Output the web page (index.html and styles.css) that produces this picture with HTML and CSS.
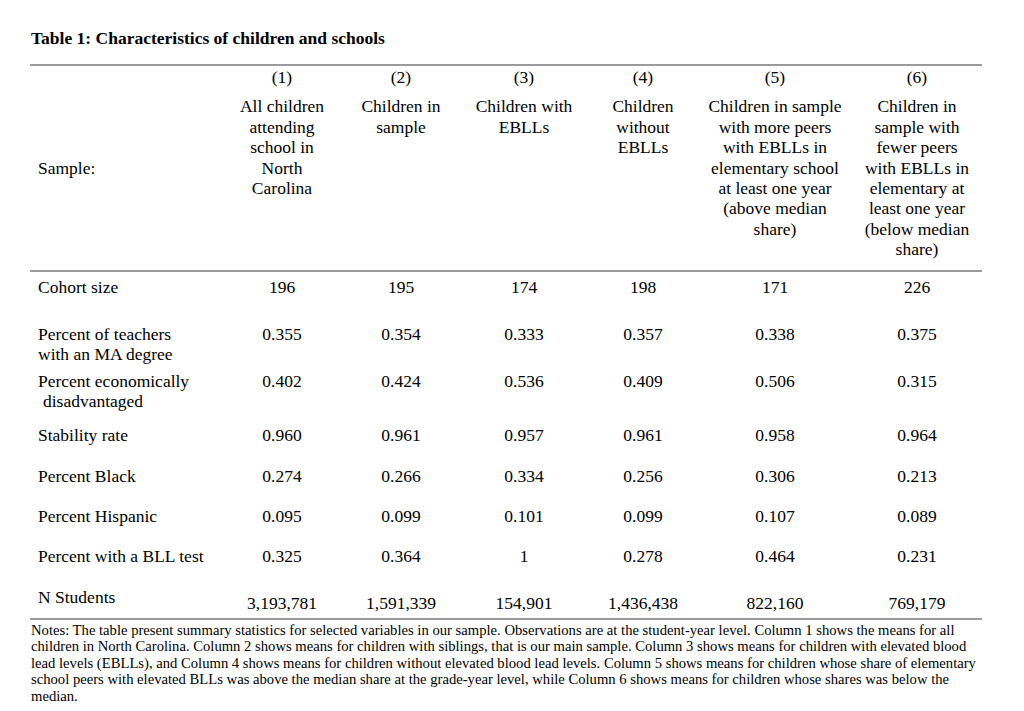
FILE: index.html
```html
<!DOCTYPE html>
<html lang="en">
<head>
<meta charset="utf-8">
<title>Table 1: Characteristics of children and schools</title>
<link rel="stylesheet" href="styles.css">
</head>
<body>
<div class="page">
  <h1 class="title">Table 1: Characteristics of children and schools</h1>
  <table class="stats">
    <colgroup>
      <col class="c-label">
      <col class="c1">
      <col class="c2">
      <col class="c3">
      <col class="c4">
      <col class="c5">
      <col class="c6">
    </colgroup>
    <thead>
      <tr class="colnums">
        <th class="label sample" rowspan="2">Sample:</th>
        <th>(1)</th>
        <th>(2)</th>
        <th>(3)</th>
        <th>(4)</th>
        <th>(5)</th>
        <th>(6)</th>
      </tr>
      <tr class="coldesc">
        <th>All children attending school in North Carolina</th>
        <th>Children in sample</th>
        <th>Children with EBLLs</th>
        <th>Children without EBLLs</th>
        <th>Children in sample with more peers with EBLLs in elementary school at least one year (above median share)</th>
        <th>Children in sample with fewer peers with EBLLs in elementary at least one year (below median share)</th>
      </tr>
    </thead>
    <tbody>
      <tr class="r-cohort">
        <td class="label">Cohort size</td>
        <td>196</td><td>195</td><td>174</td><td>198</td><td>171</td><td>226</td>
      </tr>
      <tr class="r-teachers">
        <td class="label">Percent of teachers<br>with an MA degree</td>
        <td>0.355</td><td>0.354</td><td>0.333</td><td>0.357</td><td>0.338</td><td>0.375</td>
      </tr>
      <tr class="r-econ">
        <td class="label">Percent economically<br><span class="indent">disadvantaged</span></td>
        <td>0.402</td><td>0.424</td><td>0.536</td><td>0.409</td><td>0.506</td><td>0.315</td>
      </tr>
      <tr class="r-stability">
        <td class="label">Stability rate</td>
        <td>0.960</td><td>0.961</td><td>0.957</td><td>0.961</td><td>0.958</td><td>0.964</td>
      </tr>
      <tr class="r-black">
        <td class="label">Percent Black</td>
        <td>0.274</td><td>0.266</td><td>0.334</td><td>0.256</td><td>0.306</td><td>0.213</td>
      </tr>
      <tr class="r-hispanic">
        <td class="label">Percent Hispanic</td>
        <td>0.095</td><td>0.099</td><td>0.101</td><td>0.099</td><td>0.107</td><td>0.089</td>
      </tr>
      <tr class="r-bll">
        <td class="label">Percent with a BLL test</td>
        <td>0.325</td><td>0.364</td><td>1</td><td>0.278</td><td>0.464</td><td>0.231</td>
      </tr>
      <tr class="r-n">
        <td class="label">N Students</td>
        <td>3,193,781</td><td>1,591,339</td><td>154,901</td><td>1,436,438</td><td>822,160</td><td>769,179</td>
      </tr>
    </tbody>
  </table>
  <p class="notes">Notes: The table present summary statistics for selected variables in our sample. Observations are at the student-year level. Column 1 shows the means for all<br>children in North Carolina. Column 2 shows means for children with siblings, that is our main sample. Column 3 shows means for children with elevated blood<br>lead levels (EBLLs), and Column 4 shows means for children without elevated blood lead levels. Column 5 shows means for children whose share of elementary<br>school peers with elevated BLLs was above the median share at the grade-year level, while Column 6 shows means for children whose shares was below the<br>median.</p>
</div>
</body>
</html>
```

FILE: styles.css
```css
html, body {
  margin: 0;
  padding: 0;
  background: #ffffff;
}

body {
  font-family: "Liberation Serif", "Times New Roman", serif;
  color: #000000;
}

.page {
  padding: 28px 0 0 30px;
  width: 952px;
}

.title {
  margin: 0 0 16px 1px;
  font-size: 17.5px;
  line-height: 20px;
  font-weight: bold;
}

.stats {
  width: 952px;
  table-layout: fixed;
  border-collapse: collapse;
  font-size: 17.5px;
  line-height: 20.4px;
  border-top: 2px solid #9a9a9a;
}

.c-label { width: 192px; }
.c1 { width: 120px; }
.c2 { width: 118px; }
.c3 { width: 128px; }
.c4 { width: 110px; }
.c5 { width: 154px; }
.c6 { width: 130px; }

.stats th,
.stats td {
  font-weight: normal;
  text-align: center;
  vertical-align: top;
  padding: 4px 8px 16px;
}

.stats .label {
  text-align: left;
}

.stats thead {
  border-bottom: 2px solid #9a9a9a;
}

.stats tbody {
  border-bottom: 2px solid #9a9a9a;
}

.colnums th {
  padding-top: 1px;
  padding-bottom: 9px;
}

.coldesc th {
  padding-top: 0;
  padding-bottom: 10px;
}

.stats th.sample {
  vertical-align: middle;
  padding-top: 0;
  padding-bottom: 0;
}

.r-cohort td {
  padding-top: 5px;
  padding-bottom: 23px;
}

.r-teachers td {
  padding-bottom: 2px;
}

.r-econ td {
  padding-bottom: 9px;
}

.r-stability td {
  padding-bottom: 17px;
}

.r-black td {
  padding-bottom: 15px;
}

.r-bll td {
  padding-bottom: 17px;
}

.indent {
  padding-left: 5px;
}

.r-n td {
  padding-top: 10px;
  padding-bottom: 4px;
}

.r-n td.label {
  padding-top: 4px;
}

.notes {
  margin: 2px 0 0 1px;
  font-size: 14.65px;
  line-height: 16.5px;
  white-space: nowrap;
}
```
